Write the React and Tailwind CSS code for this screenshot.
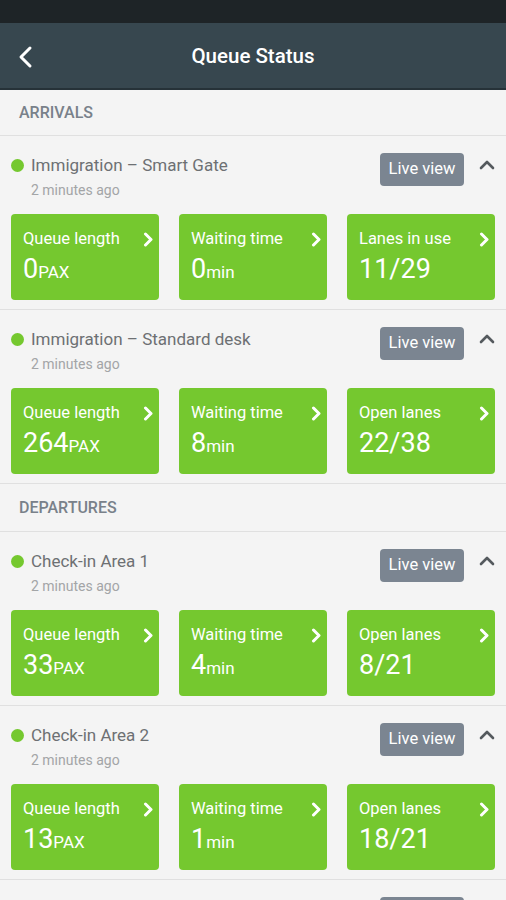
import React from "react";

const sections = [
  {
    title: "ARRIVALS",
    h: "h-[46px]",
    items: [
      {
        name: "Immigration – Smart Gate",
        tiles: [
          { label: "Queue length", value: "0", unit: "PAX" },
          { label: "Waiting time", value: "0", unit: "min" },
          { label: "Lanes in use", value: "11/29", unit: "" },
        ],
      },
      {
        name: "Immigration – Standard desk",
        tiles: [
          { label: "Queue length", value: "264", unit: "PAX" },
          { label: "Waiting time", value: "8", unit: "min" },
          { label: "Open lanes", value: "22/38", unit: "" },
        ],
      },
    ],
  },
  {
    title: "DEPARTURES",
    h: "h-[48px]",
    items: [
      {
        name: "Check-in Area 1",
        tiles: [
          { label: "Queue length", value: "33", unit: "PAX" },
          { label: "Waiting time", value: "4", unit: "min" },
          { label: "Open lanes", value: "8/21", unit: "" },
        ],
      },
      {
        name: "Check-in Area 2",
        tiles: [
          { label: "Queue length", value: "13", unit: "PAX" },
          { label: "Waiting time", value: "1", unit: "min" },
          { label: "Open lanes", value: "18/21", unit: "" },
        ],
      },
      {
        name: "Check-in Area 3",
        tiles: [
          { label: "Queue length", value: "5", unit: "PAX" },
          { label: "Waiting time", value: "1", unit: "min" },
          { label: "Open lanes", value: "6/12", unit: "" },
        ],
      },
    ],
  },
];

function Chevron() {
  return (
    <svg width="11" height="15" viewBox="0 0 11 15" className="shrink-0">
      <polyline points="2.5,2 8,7.5 2.5,13" fill="none" stroke="white" strokeWidth="3" strokeLinecap="round" strokeLinejoin="round" />
    </svg>
  );
}

function Tile({ t }) {
  return (
    <div className="h-[86px] rounded-[4px] bg-[#75c82f] pl-[12px] pr-[5px] pt-[13px] text-white">
      <div className="flex items-center justify-between">
        <span className="text-[16.5px] leading-[24px]">{t.label}</span>
        <Chevron />
      </div>
      <div className="mt-[2px] flex items-baseline leading-[32px]">
        <span className="text-[27px]">{t.value}</span>
        {t.unit && <span className="text-[17px]">{t.unit}</span>}
      </div>
    </div>
  );
}

function Item({ item }) {
  return (
    <div className="border-b border-[#e0e0e0] px-[11px] pb-[9px] pt-[17px]">
      <div className="flex items-start justify-between">
        <div>
          <div className="flex items-center">
            <span className="h-[13px] w-[13px] rounded-full bg-[#75c82f]" />
            <span className="ml-[7px] text-[17px] leading-[24px] text-[#6d7073]">{item.name}</span>
          </div>
          <div className="mt-[3px] pl-[20px] text-[14px] leading-[20px] text-[#a3a5a7]">2 minutes ago</div>
        </div>
        <div className="flex items-start">
          <div className="flex h-[33px] w-[84px] items-center justify-center rounded-[4px] bg-[#7b8591] text-[16.5px] text-white">
            Live view
          </div>
          <svg width="16" height="12" viewBox="0 0 16 12" className="ml-[15px] mt-[6px]">
            <polyline points="2,9 8,3 14,9" fill="none" stroke="#555a5e" strokeWidth="2.6" strokeLinecap="round" strokeLinejoin="round" />
          </svg>
        </div>
      </div>
      <div className="mt-[14px] grid grid-cols-3 gap-x-[20px]">
        {item.tiles.map((t, i) => (
          <Tile key={i} t={t} />
        ))}
      </div>
    </div>
  );
}

export default function App() {
  return (
    <div className="h-[900px] overflow-hidden bg-[#f4f4f4]" style={{ fontFamily: "Roboto, 'Noto Sans', sans-serif" }}>
      <div className="h-[23px] bg-[#1e2427]" />
      <div className="relative flex h-[67px] items-center justify-center border-b-2 border-[#263238] bg-[#37474f]">
        <svg width="18" height="24" viewBox="0 0 18 24" className="absolute left-[16px] top-[22px]">
          <polyline points="14,3 5,12 14,21" fill="none" stroke="white" strokeWidth="3" strokeLinecap="round" strokeLinejoin="round" />
        </svg>
        <span className="pt-[2px] text-[20.5px] font-medium text-white">Queue Status</span>
      </div>
      {sections.map((s) => (
        <div key={s.title}>
          <div className={`flex ${s.h} items-center border-b border-[#e0e0e0] px-[19px] text-[16px] font-medium text-[#79818a]`}>
            {s.title}
          </div>
          {s.items.map((it) => (
            <Item key={it.name} item={it} />
          ))}
        </div>
      ))}
    </div>
  );
}
